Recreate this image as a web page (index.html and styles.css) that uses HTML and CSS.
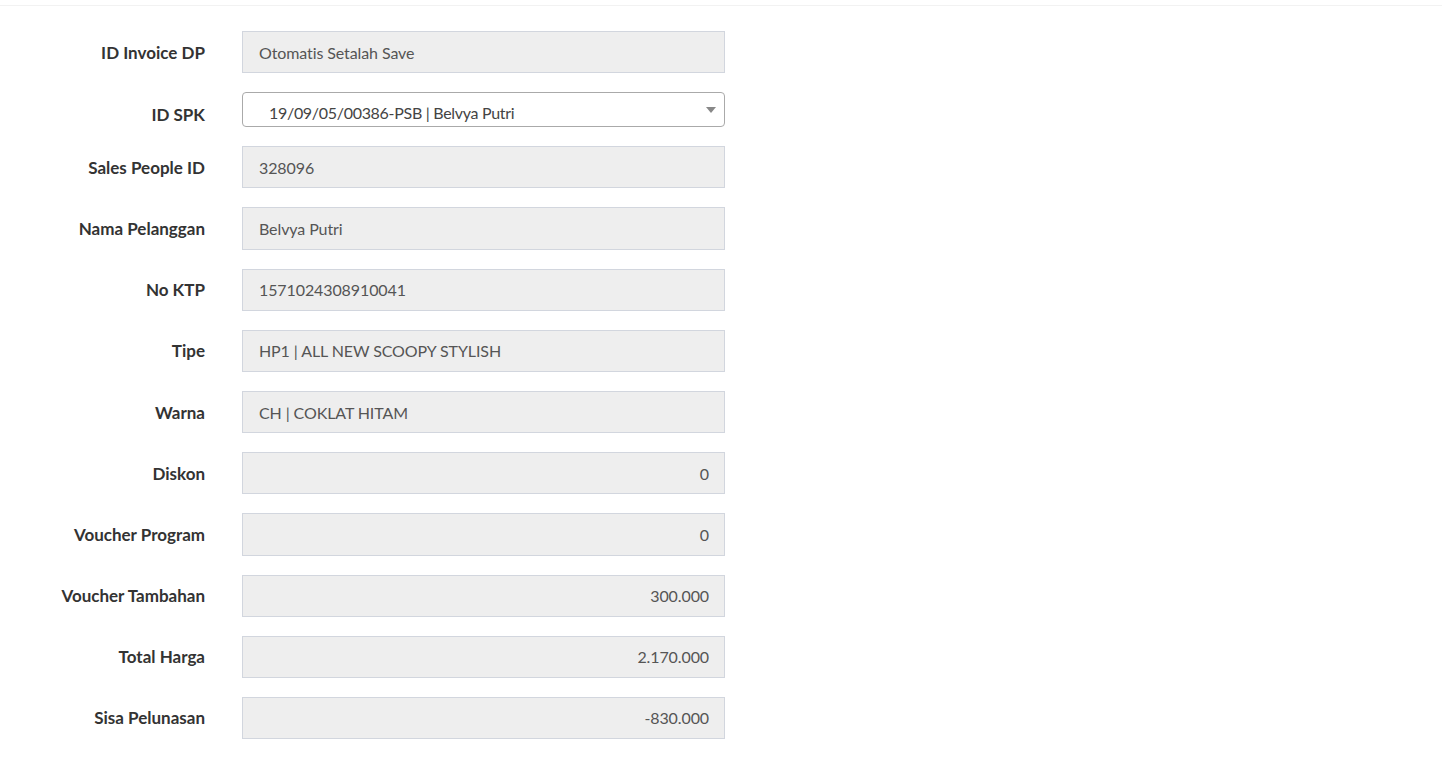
FILE: index.html
```html
<!DOCTYPE html>
<html>
<head>
<meta charset="utf-8">
<link rel="stylesheet" href="styles.css">
</head>
<body>
<div class="topbar"></div>
<form class="form">
  <div class="row"><label class="lbl">ID Invoice DP</label><div class="field">Otomatis Setalah Save</div></div>
  <div class="row"><label class="lbl lbl-sel">ID SPK</label><div class="select"><span class="sel-text">19/09/05/00386-PSB | Belvya Putri</span><span class="arrow"></span></div></div>
  <div class="row"><label class="lbl">Sales People ID</label><div class="field">328096</div></div>
  <div class="row"><label class="lbl">Nama Pelanggan</label><div class="field">Belvya Putri</div></div>
  <div class="row"><label class="lbl">No KTP</label><div class="field">1571024308910041</div></div>
  <div class="row"><label class="lbl">Tipe</label><div class="field">HP1 | ALL NEW SCOOPY STYLISH</div></div>
  <div class="row"><label class="lbl">Warna</label><div class="field">CH | COKLAT HITAM</div></div>
  <div class="row"><label class="lbl">Diskon</label><div class="field num">0</div></div>
  <div class="row"><label class="lbl">Voucher Program</label><div class="field num">0</div></div>
  <div class="row"><label class="lbl">Voucher Tambahan</label><div class="field num">300.000</div></div>
  <div class="row"><label class="lbl">Total Harga</label><div class="field num">2.170.000</div></div>
  <div class="row"><label class="lbl">Sisa Pelunasan</label><div class="field num">-830.000</div></div>
</form>
</body>
</html>
```
FILE: styles.css
```css
html, body {
  margin: 0;
  padding: 0;
  background: #fff;
  font-family: Lato, "Open Sans", sans-serif;
  color: #333;
}
.topbar {
  height: 5px;
  border-bottom: 1px solid #f2f2f2;
}
.form {
  display: flex;
  flex-direction: column;
  gap: 19px;
  padding-top: 25px;
}
.row {
  display: grid;
  grid-template-columns: 205px 483px;
  column-gap: 37px;
  align-items: start;
}
.lbl {
  box-sizing: border-box;
  height: 42.2px;
  display: flex;
  align-items: center;
  justify-content: flex-end;
  font-weight: bold;
  font-size: 17px;
  color: #333;
  white-space: nowrap;
}
.lbl.lbl-sel {
  height: 35px;
  padding-top: 9px;
}
.field {
  box-sizing: border-box;
  height: 42.2px;
  background: #eeeeee;
  border: 1px solid #d2d6de;
  padding: 0 15px 0 16px;
  display: flex;
  align-items: center;
  font-size: 16px;
  color: #555;
  letter-spacing: -0.1px;
}
.field.num {
  justify-content: flex-end;
}
.select {
  box-sizing: border-box;
  height: 35px;
  background: #fff;
  border: 1px solid #aaa;
  border-radius: 4px;
  padding: 0 0 0 26px;
  display: flex;
  align-items: center;
  position: relative;
  font-size: 16px;
  color: #444;
  letter-spacing: -0.3px;
}
.sel-text {
  padding-top: 6px;
}
.arrow {
  position: absolute;
  right: 8px;
  top: 14px;
  width: 0;
  height: 0;
  border-left: 5px solid transparent;
  border-right: 5px solid transparent;
  border-top: 6px solid #888;
}
```
